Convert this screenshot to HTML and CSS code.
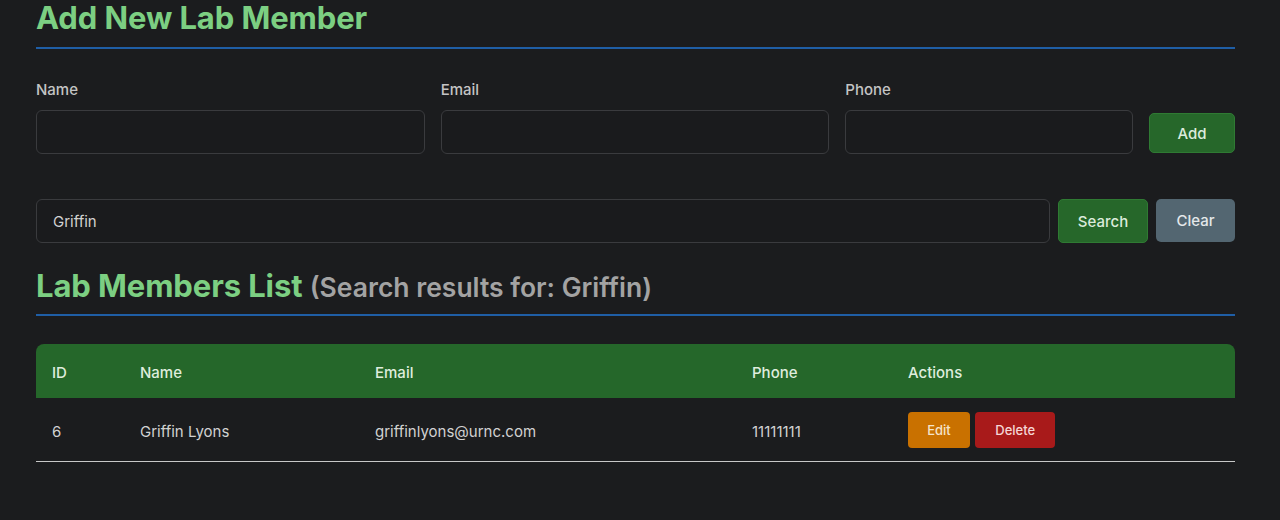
FILE: index.html
```html
<!DOCTYPE html>
<html lang="en">
<head>
<meta charset="utf-8">
<title>Lab Members</title>
<link rel="stylesheet" href="styles.css">
</head>
<body>
<main class="container">
  <h1 class="section-title">Add New Lab Member</h1>
  <form class="add-form">
    <div class="field">
      <label class="field-label">Name</label>
      <input class="text-input" type="text">
    </div>
    <div class="field">
      <label class="field-label">Email</label>
      <input class="text-input" type="text">
    </div>
    <div class="field">
      <label class="field-label">Phone</label>
      <input class="text-input" type="text">
    </div>
    <button type="button" class="btn btn-green btn-add">Add</button>
  </form>

  <form class="search-form">
    <input class="text-input search-input" type="text" value="Griffin">
    <button type="button" class="btn btn-green btn-search">Search</button>
    <button type="button" class="btn btn-gray btn-clear">Clear</button>
  </form>

  <h2 class="section-title list-title">Lab Members List <span class="subtitle">(Search results for: Griffin)</span></h2>

  <table class="members">
    <thead>
      <tr>
        <th class="col-id">ID</th>
        <th class="col-name">Name</th>
        <th class="col-email">Email</th>
        <th class="col-phone">Phone</th>
        <th class="col-actions">Actions</th>
      </tr>
    </thead>
    <tbody>
      <tr>
        <td>6</td>
        <td>Griffin Lyons</td>
        <td>griffinlyons@urnc.com</td>
        <td>11111111</td>
        <td class="actions">
          <button type="button" class="btn-sm btn-edit">Edit</button>
          <button type="button" class="btn-sm btn-delete">Delete</button>
        </td>
      </tr>
    </tbody>
  </table>
</main>
</body>
</html>
```

FILE: styles.css
```css
* { box-sizing: border-box; }

html, body {
  margin: 0;
  padding: 0;
  background: #1b1c1e;
  color: #d4d4d4;
  font-family: Inter, "Noto Sans", "Liberation Sans", sans-serif;
}

.container {
  width: 1199px;
  margin-left: 36px;
}

.section-title {
  margin: 0;
  font-size: 31px;
  line-height: 36px;
  font-weight: 700;
  color: #7ccf82;
  padding-bottom: 11px;
  border-bottom: 2px solid #1f5ea6;
  letter-spacing: -0.1px;
}

.list-title {
  padding-bottom: 10px;
}

.subtitle {
  font-size: 26.5px;
  line-height: 1;
  font-weight: 600;
  color: #a3a3a3;
  letter-spacing: 0;
}

.add-form {
  margin-top: 31px;
  display: grid;
  grid-template-columns: 389fr 389fr 288fr 86px;
  column-gap: 16px;
  align-items: end;
}

.field {
  display: flex;
  flex-direction: column;
}

.field-label {
  font-size: 15px;
  line-height: 20px;
  font-weight: 500;
  color: #c4c4c4;
  margin-bottom: 10px;
}

.text-input {
  height: 44px;
  width: 100%;
  background: #1a1b1d;
  border: 1px solid #3a3b3e;
  border-radius: 6px;
  padding: 0 16px;
  font-family: inherit;
  font-size: 15px;
  color: #d2d2d2;
  outline: none;
}

.btn {
  font-family: inherit;
  font-size: 15px;
  font-weight: 500;
  border-radius: 5px;
  cursor: pointer;
  color: #dcebdc;
}

.btn-green {
  background: #26672a;
  border: 1px solid #2f7a33;
}

.btn-gray {
  background: #536671;
  border: none;
  color: #e4e8ea;
}

.btn-add {
  height: 40px;
  margin-bottom: 1px;
}

.search-form {
  margin-top: 45px;
  display: flex;
  gap: 8px;
  margin-bottom: 25px;
}

.search-input {
  flex: 1;
}

.btn-search {
  width: 90px;
  height: 44px;
  padding-top: 2px;
}

.btn-clear {
  width: 79px;
  height: 43px;
  padding-bottom: 2px;
}

.members {
  margin-top: 28px;
  width: 100%;
  border-collapse: separate;
  border-spacing: 0;
}

.members th {
  background: #25672a;
  color: #dfeddd;
  font-size: 15px;
  font-weight: 500;
  text-align: left;
  height: 54px;
  padding: 2px 16px 0;
}

.members th:first-child { border-top-left-radius: 8px; }
.members th:last-child { border-top-right-radius: 8px; }

.col-id { width: 88px; }
.col-name { width: 235px; }
.col-email { width: 377px; }
.col-phone { width: 156px; }

.members td {
  height: 64px;
  padding: 3px 16px 0;
  font-size: 15px;
  color: #d2d2d2;
  border-bottom: 1px solid #c8c8c8;
}

.members td.actions {
  padding-top: 0;
  white-space: nowrap;
}

.btn-sm {
  height: 36px;
  border: none;
  border-radius: 4px;
  font-family: inherit;
  font-size: 13px;
  font-weight: 500;
  cursor: pointer;
  vertical-align: middle;
}

.btn-edit {
  width: 62px;
  background: #c97100;
  color: #f5e3c9;
}

.btn-delete {
  width: 80px;
  margin-left: 1px;
  background: #a81a1a;
  color: #f5d6d6;
}
```
